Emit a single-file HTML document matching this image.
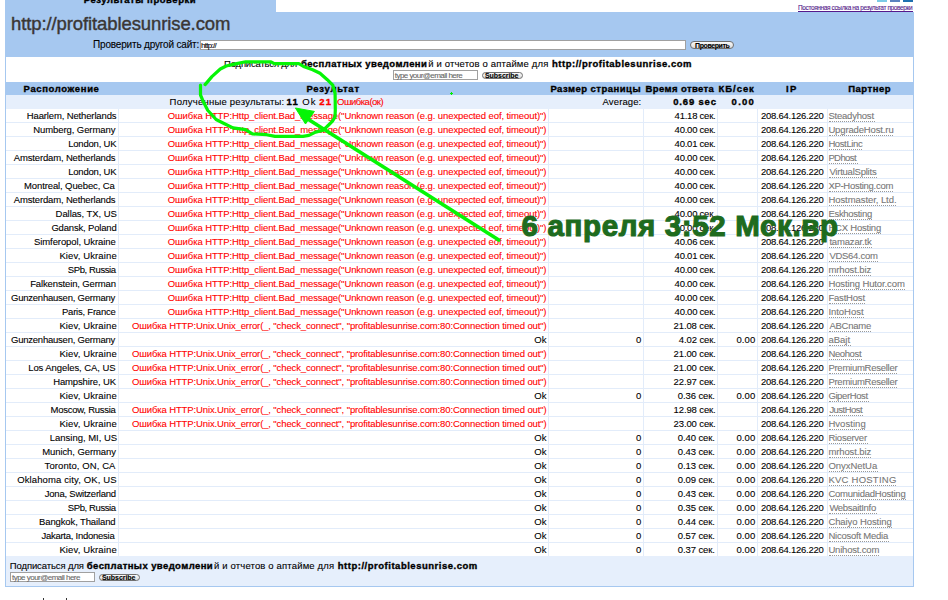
<!DOCTYPE html>
<html><head><meta charset="utf-8"><style>
html,body{margin:0;padding:0;background:#fff;}
body{width:948px;height:600px;overflow:hidden;position:relative;font-family:"Liberation Sans",sans-serif;}
body>div{position:absolute;white-space:pre;-webkit-text-stroke:0.1px currentColor;}
</style></head><body>
<div style="left:5px;top:0px;width:271px;height:12px;background:#a6c8f0;"></div>
<div style="left:5px;top:12px;width:909px;height:45px;background:#a6c8f0;"></div>
<div style="left:83.80px;top:-5px;font-size:9.5px;line-height:9.5px;letter-spacing:0.538px;color:#000;font-weight:bold;-webkit-text-stroke:0.35px currentColor;">Результаты проверки</div>
<div style="left:877px;top:0px;width:10px;height:2px;background:#7ccbe6;"></div>
<div style="left:890px;top:0px;width:10px;height:2px;background:#5a82c0;"></div>
<div style="left:903px;top:0px;width:10px;height:2px;background:#1f70b0;"></div>
<div style="left:798.00px;top:5px;font-size:6.5px;line-height:6.5px;letter-spacing:-0.374px;color:#551a8b;">Постоянная ссылка на результат проверки</div>
<div style="left:798px;top:11px;width:115px;height:1px;background:#551a8b;"></div>
<div style="left:11.00px;top:15px;font-size:18.5px;line-height:18.5px;letter-spacing:-0.100px;color:#3a3634;-webkit-text-stroke:0.4px currentColor;">http://profitablesunrise.com</div>
<div style="left:93.00px;top:40px;font-size:10px;line-height:10px;letter-spacing:-0.174px;color:#000;">Проверить другой сайт:</div>
<div style="left:200px;top:40px;width:484px;height:8px;background:#fff;border:1px solid #a0a0a0;"></div>
<div style="left:201.00px;top:42px;font-size:8px;line-height:8px;letter-spacing:-0.715px;color:#000;">http://</div>
<div style="left:690px;top:41px;width:42px;height:6px;background:linear-gradient(#fafafa,#dcdcdc);border:1px solid #707070;border-radius:4px;"></div>
<div style="left:695.00px;top:42px;font-size:7px;line-height:7px;letter-spacing:-0.399px;color:#000;font-weight:bold;-webkit-text-stroke:0.1px currentColor;">Проверить</div>
<div style="left:5px;top:57px;width:1px;height:25px;background:#a6c8f0;"></div>
<div style="left:913px;top:57px;width:1px;height:25px;background:#a6c8f0;"></div>
<div style="left:224.00px;top:59px;font-size:9.5px;line-height:9.5px;letter-spacing:-0.189px;color:#000;">Подписаться для</div>
<div style="left:301.00px;top:59px;font-size:9.5px;line-height:9.5px;letter-spacing:0.413px;color:#000;font-weight:bold;-webkit-text-stroke:0.35px currentColor;">бесплатных уведомлени</div>
<div style="left:428.20px;top:59px;font-size:9.5px;line-height:9.5px;letter-spacing:0.159px;color:#000;">й и отчетов о аптайме для</div>
<div style="left:552.00px;top:59px;font-size:9.5px;line-height:9.5px;letter-spacing:0.512px;color:#000;font-weight:bold;-webkit-text-stroke:0.35px currentColor;">http://profitablesunrise.com</div>
<div style="left:393px;top:70px;width:83px;height:8px;background:#fff;border:1px solid #a0a0a0;"></div>
<div style="left:394.80px;top:72px;font-size:8px;line-height:8px;letter-spacing:-0.549px;color:#666;">type your@email here</div>
<div style="left:482px;top:72px;width:39px;height:5px;background:linear-gradient(#fafafa,#dcdcdc);border:1px solid #707070;border-radius:4px;"></div>
<div style="left:485.00px;top:72px;font-size:7px;line-height:7px;letter-spacing:-0.056px;color:#000;font-weight:bold;-webkit-text-stroke:0.1px currentColor;">Subscribe</div>
<div style="left:5px;top:82px;width:909px;height:505px;background:#fff;border:1px solid #a6c8f0;border-top:none;box-sizing:border-box;"></div>
<div style="left:5px;top:82px;width:909px;height:13px;background:#a6c8f0;"></div>
<div style="left:6px;top:95px;width:907px;height:14px;background:#e6effc;"></div>
<div style="left:23.60px;top:84px;font-size:9.5px;line-height:9.5px;letter-spacing:0.623px;color:#000;font-weight:bold;-webkit-text-stroke:0.35px currentColor;">Расположение</div>
<div style="left:306.40px;top:84px;font-size:9.5px;line-height:9.5px;letter-spacing:0.750px;color:#000;font-weight:bold;-webkit-text-stroke:0.35px currentColor;">Результат</div>
<div style="left:550.40px;top:84px;font-size:9.5px;line-height:9.5px;letter-spacing:0.479px;color:#000;font-weight:bold;-webkit-text-stroke:0.35px currentColor;">Размер страницы</div>
<div style="left:645.60px;top:84px;font-size:9.5px;line-height:9.5px;letter-spacing:0.384px;color:#000;font-weight:bold;-webkit-text-stroke:0.35px currentColor;">Время ответа</div>
<div style="left:718.60px;top:84px;font-size:9.5px;line-height:9.5px;letter-spacing:0.933px;color:#000;font-weight:bold;-webkit-text-stroke:0.35px currentColor;">КБ/сек</div>
<div style="left:786.00px;top:84px;font-size:9.5px;line-height:9.5px;letter-spacing:1.361px;color:#000;font-weight:bold;-webkit-text-stroke:0.35px currentColor;">IP</div>
<div style="left:848.20px;top:84px;font-size:9.5px;line-height:9.5px;letter-spacing:0.506px;color:#000;font-weight:bold;-webkit-text-stroke:0.35px currentColor;">Партнер</div>
<div style="left:169.60px;top:97px;font-size:9.5px;line-height:9.5px;letter-spacing:0.235px;color:#000;">Полученные результаты:</div>
<div style="left:286.40px;top:97px;font-size:9.5px;line-height:9.5px;letter-spacing:1.241px;color:#000;font-weight:bold;-webkit-text-stroke:0.35px currentColor;">11</div>
<div style="left:302.20px;top:97px;font-size:9.5px;line-height:9.5px;letter-spacing:1.111px;color:#000;">Ok</div>
<div style="left:319.20px;top:97px;font-size:9.5px;line-height:9.5px;letter-spacing:1.217px;color:#f00;font-weight:bold;-webkit-text-stroke:0.35px currentColor;">21</div>
<div style="left:337.00px;top:97px;font-size:9.5px;line-height:9.5px;letter-spacing:-0.501px;color:#f00;">Ошибка(ок)</div>
<div style="left:602.60px;top:97px;font-size:9.5px;line-height:9.5px;letter-spacing:0.113px;color:#000;">Average:</div>
<div style="left:673.20px;top:97px;font-size:9.5px;line-height:9.5px;letter-spacing:0.829px;color:#000;font-weight:bold;-webkit-text-stroke:0.35px currentColor;">0.69 sec</div>
<div style="left:731.60px;top:97px;font-size:9.5px;line-height:9.5px;letter-spacing:1.265px;color:#000;font-weight:bold;-webkit-text-stroke:0.35px currentColor;">0.00</div>
<div style="left:6px;top:122px;width:907px;height:1px;background:#e2ecfa;"></div>
<div style="left:26.80px;top:111px;font-size:9.5px;line-height:9.5px;letter-spacing:-0.140px;color:#000;">Haarlem, Netherlands</div>
<div style="left:167.80px;top:111px;font-size:9.5px;line-height:9.5px;letter-spacing:-0.100px;color:#f00;">Ошибка HTTP:Http_client.Bad_message("Unknown reason (e.g. unexpected eof, timeout)")</div>
<div style="left:674.60px;top:111px;font-size:9.5px;line-height:9.5px;letter-spacing:-0.234px;color:#000;">41.18 сек.</div>
<div style="left:761.00px;top:111px;font-size:9.5px;line-height:9.5px;letter-spacing:-0.250px;color:#000;">208.64.126.220</div>
<div style="left:828.40px;top:111px;font-size:9.5px;line-height:9.5px;letter-spacing:-0.210px;color:#777;">Steadyhost</div>
<div style="left:829px;top:121.1px;width:46px;height:1px;background:transparent;border-top:1px dotted #999;height:0;"></div>
<div style="left:6px;top:136px;width:907px;height:1px;background:#e2ecfa;"></div>
<div style="left:33.20px;top:125px;font-size:9.5px;line-height:9.5px;letter-spacing:-0.078px;color:#000;">Numberg, Germany</div>
<div style="left:167.80px;top:125px;font-size:9.5px;line-height:9.5px;letter-spacing:-0.100px;color:#f00;">Ошибка HTTP:Http_client.Bad_message("Unknown reason (e.g. unexpected eof, timeout)")</div>
<div style="left:674.60px;top:125px;font-size:9.5px;line-height:9.5px;letter-spacing:-0.234px;color:#000;">40.00 сек.</div>
<div style="left:761.00px;top:125px;font-size:9.5px;line-height:9.5px;letter-spacing:-0.250px;color:#000;">208.64.126.220</div>
<div style="left:828.40px;top:125px;font-size:9.5px;line-height:9.5px;letter-spacing:-0.137px;color:#777;">UpgradeHost.ru</div>
<div style="left:829px;top:135.1px;width:64px;height:1px;background:transparent;border-top:1px dotted #999;height:0;"></div>
<div style="left:6px;top:150px;width:907px;height:1px;background:#e2ecfa;"></div>
<div style="left:68.20px;top:139px;font-size:9.5px;line-height:9.5px;letter-spacing:-0.204px;color:#000;">London, UK</div>
<div style="left:167.80px;top:139px;font-size:9.5px;line-height:9.5px;letter-spacing:-0.100px;color:#f00;">Ошибка HTTP:Http_client.Bad_message("Unknown reason (e.g. unexpected eof, timeout)")</div>
<div style="left:674.60px;top:139px;font-size:9.5px;line-height:9.5px;letter-spacing:-0.234px;color:#000;">40.01 сек.</div>
<div style="left:761.00px;top:139px;font-size:9.5px;line-height:9.5px;letter-spacing:-0.250px;color:#000;">208.64.126.220</div>
<div style="left:828.40px;top:139px;font-size:9.5px;line-height:9.5px;letter-spacing:-0.387px;color:#777;">HostLinc</div>
<div style="left:829px;top:149.1px;width:33px;height:1px;background:transparent;border-top:1px dotted #999;height:0;"></div>
<div style="left:6px;top:164px;width:907px;height:1px;background:#e2ecfa;"></div>
<div style="left:13.80px;top:153px;font-size:9.5px;line-height:9.5px;letter-spacing:-0.158px;color:#000;">Amsterdam, Netherlands</div>
<div style="left:167.80px;top:153px;font-size:9.5px;line-height:9.5px;letter-spacing:-0.100px;color:#f00;">Ошибка HTTP:Http_client.Bad_message("Unknown reason (e.g. unexpected eof, timeout)")</div>
<div style="left:674.60px;top:153px;font-size:9.5px;line-height:9.5px;letter-spacing:-0.234px;color:#000;">40.00 сек.</div>
<div style="left:761.00px;top:153px;font-size:9.5px;line-height:9.5px;letter-spacing:-0.250px;color:#000;">208.64.126.220</div>
<div style="left:828.40px;top:153px;font-size:9.5px;line-height:9.5px;letter-spacing:-0.603px;color:#777;">PDhost</div>
<div style="left:829px;top:163.1px;width:29px;height:1px;background:transparent;border-top:1px dotted #999;height:0;"></div>
<div style="left:6px;top:178px;width:907px;height:1px;background:#e2ecfa;"></div>
<div style="left:68.20px;top:167px;font-size:9.5px;line-height:9.5px;letter-spacing:-0.204px;color:#000;">London, UK</div>
<div style="left:167.80px;top:167px;font-size:9.5px;line-height:9.5px;letter-spacing:-0.100px;color:#f00;">Ошибка HTTP:Http_client.Bad_message("Unknown reason (e.g. unexpected eof, timeout)")</div>
<div style="left:674.60px;top:167px;font-size:9.5px;line-height:9.5px;letter-spacing:-0.234px;color:#000;">40.00 сек.</div>
<div style="left:761.00px;top:167px;font-size:9.5px;line-height:9.5px;letter-spacing:-0.250px;color:#000;">208.64.126.220</div>
<div style="left:829.40px;top:167px;font-size:9.5px;line-height:9.5px;letter-spacing:-0.228px;color:#777;">VirtualSplits</div>
<div style="left:829px;top:177.1px;width:48px;height:1px;background:transparent;border-top:1px dotted #999;height:0;"></div>
<div style="left:6px;top:192px;width:907px;height:1px;background:#e2ecfa;"></div>
<div style="left:24.00px;top:181px;font-size:9.5px;line-height:9.5px;letter-spacing:-0.113px;color:#000;">Montreal, Quebec, Ca</div>
<div style="left:167.80px;top:181px;font-size:9.5px;line-height:9.5px;letter-spacing:-0.100px;color:#f00;">Ошибка HTTP:Http_client.Bad_message("Unknown reason (e.g. unexpected eof, timeout)")</div>
<div style="left:674.60px;top:181px;font-size:9.5px;line-height:9.5px;letter-spacing:-0.234px;color:#000;">40.00 сек.</div>
<div style="left:761.00px;top:181px;font-size:9.5px;line-height:9.5px;letter-spacing:-0.250px;color:#000;">208.64.126.220</div>
<div style="left:828.40px;top:181px;font-size:9.5px;line-height:9.5px;letter-spacing:-0.286px;color:#777;">XP-Hosting.com</div>
<div style="left:829px;top:191.1px;width:64px;height:1px;background:transparent;border-top:1px dotted #999;height:0;"></div>
<div style="left:6px;top:206px;width:907px;height:1px;background:#e2ecfa;"></div>
<div style="left:13.80px;top:195px;font-size:9.5px;line-height:9.5px;letter-spacing:-0.158px;color:#000;">Amsterdam, Netherlands</div>
<div style="left:167.80px;top:195px;font-size:9.5px;line-height:9.5px;letter-spacing:-0.100px;color:#f00;">Ошибка HTTP:Http_client.Bad_message("Unknown reason (e.g. unexpected eof, timeout)")</div>
<div style="left:674.60px;top:195px;font-size:9.5px;line-height:9.5px;letter-spacing:-0.234px;color:#000;">40.00 сек.</div>
<div style="left:761.00px;top:195px;font-size:9.5px;line-height:9.5px;letter-spacing:-0.250px;color:#000;">208.64.126.220</div>
<div style="left:828.40px;top:195px;font-size:9.5px;line-height:9.5px;letter-spacing:-0.069px;color:#777;">Hostmaster, Ltd.</div>
<div style="left:829px;top:205.1px;width:67px;height:1px;background:transparent;border-top:1px dotted #999;height:0;"></div>
<div style="left:6px;top:220px;width:907px;height:1px;background:#e2ecfa;"></div>
<div style="left:55.60px;top:209px;font-size:9.5px;line-height:9.5px;letter-spacing:-0.074px;color:#000;">Dallas, TX, US</div>
<div style="left:167.80px;top:209px;font-size:9.5px;line-height:9.5px;letter-spacing:-0.100px;color:#f00;">Ошибка HTTP:Http_client.Bad_message("Unknown reason (e.g. unexpected eof, timeout)")</div>
<div style="left:674.60px;top:209px;font-size:9.5px;line-height:9.5px;letter-spacing:-0.234px;color:#000;">40.00 сек.</div>
<div style="left:761.00px;top:209px;font-size:9.5px;line-height:9.5px;letter-spacing:-0.250px;color:#000;">208.64.126.220</div>
<div style="left:828.40px;top:209px;font-size:9.5px;line-height:9.5px;letter-spacing:-0.299px;color:#777;">Eskhosting</div>
<div style="left:829px;top:219.1px;width:43px;height:1px;background:transparent;border-top:1px dotted #999;height:0;"></div>
<div style="left:6px;top:234px;width:907px;height:1px;background:#e2ecfa;"></div>
<div style="left:51.40px;top:223px;font-size:9.5px;line-height:9.5px;letter-spacing:-0.178px;color:#000;">Gdansk, Poland</div>
<div style="left:167.80px;top:223px;font-size:9.5px;line-height:9.5px;letter-spacing:-0.100px;color:#f00;">Ошибка HTTP:Http_client.Bad_message("Unknown reason (e.g. unexpected eof, timeout)")</div>
<div style="left:674.60px;top:223px;font-size:9.5px;line-height:9.5px;letter-spacing:-0.234px;color:#000;">40.00 сек.</div>
<div style="left:761.00px;top:223px;font-size:9.5px;line-height:9.5px;letter-spacing:-0.250px;color:#000;">208.64.126.220</div>
<div style="left:828.40px;top:223px;font-size:9.5px;line-height:9.5px;letter-spacing:-0.212px;color:#777;">HCX Hosting</div>
<div style="left:829px;top:233.1px;width:52px;height:1px;background:transparent;border-top:1px dotted #999;height:0;"></div>
<div style="left:6px;top:248px;width:907px;height:1px;background:#e2ecfa;"></div>
<div style="left:34.00px;top:237px;font-size:9.5px;line-height:9.5px;letter-spacing:-0.091px;color:#000;">Simferopol, Ukraine</div>
<div style="left:167.80px;top:237px;font-size:9.5px;line-height:9.5px;letter-spacing:-0.100px;color:#f00;">Ошибка HTTP:Http_client.Bad_message("Unknown reason (e.g. unexpected eof, timeout)")</div>
<div style="left:674.60px;top:237px;font-size:9.5px;line-height:9.5px;letter-spacing:-0.234px;color:#000;">40.06 сек.</div>
<div style="left:761.00px;top:237px;font-size:9.5px;line-height:9.5px;letter-spacing:-0.250px;color:#000;">208.64.126.220</div>
<div style="left:829.40px;top:237px;font-size:9.5px;line-height:9.5px;letter-spacing:-0.175px;color:#777;">tamazar.tk</div>
<div style="left:829px;top:247.1px;width:43px;height:1px;background:transparent;border-top:1px dotted #999;height:0;"></div>
<div style="left:6px;top:262px;width:907px;height:1px;background:#e2ecfa;"></div>
<div style="left:59.40px;top:251px;font-size:9.5px;line-height:9.5px;letter-spacing:0.125px;color:#000;">Kiev, Ukraine</div>
<div style="left:167.80px;top:251px;font-size:9.5px;line-height:9.5px;letter-spacing:-0.100px;color:#f00;">Ошибка HTTP:Http_client.Bad_message("Unknown reason (e.g. unexpected eof, timeout)")</div>
<div style="left:674.60px;top:251px;font-size:9.5px;line-height:9.5px;letter-spacing:-0.234px;color:#000;">40.01 сек.</div>
<div style="left:761.00px;top:251px;font-size:9.5px;line-height:9.5px;letter-spacing:-0.250px;color:#000;">208.64.126.220</div>
<div style="left:829.40px;top:251px;font-size:9.5px;line-height:9.5px;letter-spacing:-0.284px;color:#777;">VDS64.com</div>
<div style="left:829px;top:261.1px;width:49px;height:1px;background:transparent;border-top:1px dotted #999;height:0;"></div>
<div style="left:6px;top:276px;width:907px;height:1px;background:#e2ecfa;"></div>
<div style="left:67.80px;top:265px;font-size:9.5px;line-height:9.5px;letter-spacing:-0.399px;color:#000;">SPb, Russia</div>
<div style="left:167.80px;top:265px;font-size:9.5px;line-height:9.5px;letter-spacing:-0.100px;color:#f00;">Ошибка HTTP:Http_client.Bad_message("Unknown reason (e.g. unexpected eof, timeout)")</div>
<div style="left:674.60px;top:265px;font-size:9.5px;line-height:9.5px;letter-spacing:-0.234px;color:#000;">40.00 сек.</div>
<div style="left:761.00px;top:265px;font-size:9.5px;line-height:9.5px;letter-spacing:-0.250px;color:#000;">208.64.126.220</div>
<div style="left:828.40px;top:265px;font-size:9.5px;line-height:9.5px;letter-spacing:-0.119px;color:#777;">mrhost.biz</div>
<div style="left:829px;top:275.1px;width:42px;height:1px;background:transparent;border-top:1px dotted #999;height:0;"></div>
<div style="left:6px;top:290px;width:907px;height:1px;background:#e2ecfa;"></div>
<div style="left:30.20px;top:279px;font-size:9.5px;line-height:9.5px;letter-spacing:-0.133px;color:#000;">Falkenstein, German</div>
<div style="left:167.80px;top:279px;font-size:9.5px;line-height:9.5px;letter-spacing:-0.100px;color:#f00;">Ошибка HTTP:Http_client.Bad_message("Unknown reason (e.g. unexpected eof, timeout)")</div>
<div style="left:674.60px;top:279px;font-size:9.5px;line-height:9.5px;letter-spacing:-0.234px;color:#000;">40.00 сек.</div>
<div style="left:761.00px;top:279px;font-size:9.5px;line-height:9.5px;letter-spacing:-0.250px;color:#000;">208.64.126.220</div>
<div style="left:828.40px;top:279px;font-size:9.5px;line-height:9.5px;letter-spacing:-0.108px;color:#777;">Hosting Hutor.com</div>
<div style="left:829px;top:289.1px;width:76px;height:1px;background:transparent;border-top:1px dotted #999;height:0;"></div>
<div style="left:6px;top:304px;width:907px;height:1px;background:#e2ecfa;"></div>
<div style="left:11.00px;top:293px;font-size:9.5px;line-height:9.5px;letter-spacing:-0.227px;color:#000;">Gunzenhausen, Germany</div>
<div style="left:167.80px;top:293px;font-size:9.5px;line-height:9.5px;letter-spacing:-0.100px;color:#f00;">Ошибка HTTP:Http_client.Bad_message("Unknown reason (e.g. unexpected eof, timeout)")</div>
<div style="left:674.60px;top:293px;font-size:9.5px;line-height:9.5px;letter-spacing:-0.234px;color:#000;">40.00 сек.</div>
<div style="left:761.00px;top:293px;font-size:9.5px;line-height:9.5px;letter-spacing:-0.250px;color:#000;">208.64.126.220</div>
<div style="left:828.40px;top:293px;font-size:9.5px;line-height:9.5px;letter-spacing:-0.196px;color:#777;">FastHost</div>
<div style="left:829px;top:303.1px;width:36px;height:1px;background:transparent;border-top:1px dotted #999;height:0;"></div>
<div style="left:6px;top:318px;width:907px;height:1px;background:#e2ecfa;"></div>
<div style="left:62.00px;top:307px;font-size:9.5px;line-height:9.5px;letter-spacing:-0.226px;color:#000;">Paris, France</div>
<div style="left:167.80px;top:307px;font-size:9.5px;line-height:9.5px;letter-spacing:-0.100px;color:#f00;">Ошибка HTTP:Http_client.Bad_message("Unknown reason (e.g. unexpected eof, timeout)")</div>
<div style="left:674.60px;top:307px;font-size:9.5px;line-height:9.5px;letter-spacing:-0.234px;color:#000;">40.00 сек.</div>
<div style="left:761.00px;top:307px;font-size:9.5px;line-height:9.5px;letter-spacing:-0.250px;color:#000;">208.64.126.220</div>
<div style="left:828.40px;top:307px;font-size:9.5px;line-height:9.5px;letter-spacing:-0.034px;color:#777;">IntoHost</div>
<div style="left:829px;top:317.1px;width:35px;height:1px;background:transparent;border-top:1px dotted #999;height:0;"></div>
<div style="left:6px;top:332px;width:907px;height:1px;background:#e2ecfa;"></div>
<div style="left:59.40px;top:321px;font-size:9.5px;line-height:9.5px;letter-spacing:0.125px;color:#000;">Kiev, Ukraine</div>
<div style="left:132.00px;top:321px;font-size:9.5px;line-height:9.5px;letter-spacing:-0.124px;color:#f00;">Ошибка HTTP:Unix.Unix_error(_, "check_connect", "profitablesunrise.com:80:Connection timed out")</div>
<div style="left:673.60px;top:321px;font-size:9.5px;line-height:9.5px;letter-spacing:-0.122px;color:#000;">21.08 сек.</div>
<div style="left:761.00px;top:321px;font-size:9.5px;line-height:9.5px;letter-spacing:-0.250px;color:#000;">208.64.126.220</div>
<div style="left:829.40px;top:321px;font-size:9.5px;line-height:9.5px;letter-spacing:-0.252px;color:#777;">ABCname</div>
<div style="left:829px;top:331.1px;width:42px;height:1px;background:transparent;border-top:1px dotted #999;height:0;"></div>
<div style="left:6px;top:346px;width:907px;height:1px;background:#e2ecfa;"></div>
<div style="left:11.00px;top:335px;font-size:9.5px;line-height:9.5px;letter-spacing:-0.227px;color:#000;">Gunzenhausen, Germany</div>
<div style="left:534.20px;top:335px;font-size:9.5px;line-height:9.5px;letter-spacing:0.111px;color:#000;">Ok</div>
<div style="left:636.00px;top:335px;font-size:9.5px;line-height:9.5px;letter-spacing:-0.400px;color:#000;">0</div>
<div style="left:678.80px;top:335px;font-size:9.5px;line-height:9.5px;letter-spacing:-0.102px;color:#000;">4.02 сек.</div>
<div style="left:736.40px;top:335px;font-size:9.5px;line-height:9.5px;letter-spacing:0.098px;color:#000;">0.00</div>
<div style="left:761.00px;top:335px;font-size:9.5px;line-height:9.5px;letter-spacing:-0.250px;color:#000;">208.64.126.220</div>
<div style="left:828.40px;top:335px;font-size:9.5px;line-height:9.5px;letter-spacing:-0.003px;color:#777;">aBajt</div>
<div style="left:829px;top:345.1px;width:22px;height:1px;background:transparent;border-top:1px dotted #999;height:0;"></div>
<div style="left:6px;top:360px;width:907px;height:1px;background:#e2ecfa;"></div>
<div style="left:59.40px;top:349px;font-size:9.5px;line-height:9.5px;letter-spacing:0.125px;color:#000;">Kiev, Ukraine</div>
<div style="left:132.00px;top:349px;font-size:9.5px;line-height:9.5px;letter-spacing:-0.124px;color:#f00;">Ошибка HTTP:Unix.Unix_error(_, "check_connect", "profitablesunrise.com:80:Connection timed out")</div>
<div style="left:673.60px;top:349px;font-size:9.5px;line-height:9.5px;letter-spacing:-0.122px;color:#000;">21.00 сек.</div>
<div style="left:761.00px;top:349px;font-size:9.5px;line-height:9.5px;letter-spacing:-0.250px;color:#000;">208.64.126.220</div>
<div style="left:828.40px;top:349px;font-size:9.5px;line-height:9.5px;letter-spacing:-0.374px;color:#777;">Neohost</div>
<div style="left:829px;top:359.1px;width:33px;height:1px;background:transparent;border-top:1px dotted #999;height:0;"></div>
<div style="left:6px;top:374px;width:907px;height:1px;background:#e2ecfa;"></div>
<div style="left:28.20px;top:363px;font-size:9.5px;line-height:9.5px;letter-spacing:-0.078px;color:#000;">Los Angeles, CA, US</div>
<div style="left:132.00px;top:363px;font-size:9.5px;line-height:9.5px;letter-spacing:-0.124px;color:#f00;">Ошибка HTTP:Unix.Unix_error(_, "check_connect", "profitablesunrise.com:80:Connection timed out")</div>
<div style="left:673.60px;top:363px;font-size:9.5px;line-height:9.5px;letter-spacing:-0.122px;color:#000;">21.00 сек.</div>
<div style="left:761.00px;top:363px;font-size:9.5px;line-height:9.5px;letter-spacing:-0.250px;color:#000;">208.64.126.220</div>
<div style="left:828.40px;top:363px;font-size:9.5px;line-height:9.5px;letter-spacing:-0.263px;color:#777;">PremiumReseller</div>
<div style="left:829px;top:373.1px;width:68px;height:1px;background:transparent;border-top:1px dotted #999;height:0;"></div>
<div style="left:6px;top:388px;width:907px;height:1px;background:#e2ecfa;"></div>
<div style="left:53.20px;top:377px;font-size:9.5px;line-height:9.5px;letter-spacing:-0.131px;color:#000;">Hampshire, UK</div>
<div style="left:132.00px;top:377px;font-size:9.5px;line-height:9.5px;letter-spacing:-0.124px;color:#f00;">Ошибка HTTP:Unix.Unix_error(_, "check_connect", "profitablesunrise.com:80:Connection timed out")</div>
<div style="left:673.60px;top:377px;font-size:9.5px;line-height:9.5px;letter-spacing:-0.122px;color:#000;">22.97 сек.</div>
<div style="left:761.00px;top:377px;font-size:9.5px;line-height:9.5px;letter-spacing:-0.250px;color:#000;">208.64.126.220</div>
<div style="left:828.40px;top:377px;font-size:9.5px;line-height:9.5px;letter-spacing:-0.263px;color:#777;">PremiumReseller</div>
<div style="left:829px;top:387.1px;width:68px;height:1px;background:transparent;border-top:1px dotted #999;height:0;"></div>
<div style="left:6px;top:402px;width:907px;height:1px;background:#e2ecfa;"></div>
<div style="left:59.40px;top:391px;font-size:9.5px;line-height:9.5px;letter-spacing:0.125px;color:#000;">Kiev, Ukraine</div>
<div style="left:534.20px;top:391px;font-size:9.5px;line-height:9.5px;letter-spacing:0.111px;color:#000;">Ok</div>
<div style="left:636.00px;top:391px;font-size:9.5px;line-height:9.5px;letter-spacing:-0.400px;color:#000;">0</div>
<div style="left:677.80px;top:391px;font-size:9.5px;line-height:9.5px;letter-spacing:-0.102px;color:#000;">0.36 сек.</div>
<div style="left:736.40px;top:391px;font-size:9.5px;line-height:9.5px;letter-spacing:0.098px;color:#000;">0.00</div>
<div style="left:761.00px;top:391px;font-size:9.5px;line-height:9.5px;letter-spacing:-0.250px;color:#000;">208.64.126.220</div>
<div style="left:828.40px;top:391px;font-size:9.5px;line-height:9.5px;letter-spacing:-0.391px;color:#777;">GiperHost</div>
<div style="left:829px;top:401.1px;width:40px;height:1px;background:transparent;border-top:1px dotted #999;height:0;"></div>
<div style="left:6px;top:416px;width:907px;height:1px;background:#e2ecfa;"></div>
<div style="left:50.60px;top:405px;font-size:9.5px;line-height:9.5px;letter-spacing:-0.258px;color:#000;">Moscow, Russia</div>
<div style="left:132.00px;top:405px;font-size:9.5px;line-height:9.5px;letter-spacing:-0.124px;color:#f00;">Ошибка HTTP:Unix.Unix_error(_, "check_connect", "profitablesunrise.com:80:Connection timed out")</div>
<div style="left:673.60px;top:405px;font-size:9.5px;line-height:9.5px;letter-spacing:-0.122px;color:#000;">12.98 сек.</div>
<div style="left:761.00px;top:405px;font-size:9.5px;line-height:9.5px;letter-spacing:-0.250px;color:#000;">208.64.126.220</div>
<div style="left:829.40px;top:405px;font-size:9.5px;line-height:9.5px;letter-spacing:-0.545px;color:#777;">JustHost</div>
<div style="left:829px;top:415.1px;width:34px;height:1px;background:transparent;border-top:1px dotted #999;height:0;"></div>
<div style="left:6px;top:430px;width:907px;height:1px;background:#e2ecfa;"></div>
<div style="left:59.40px;top:419px;font-size:9.5px;line-height:9.5px;letter-spacing:0.125px;color:#000;">Kiev, Ukraine</div>
<div style="left:132.00px;top:419px;font-size:9.5px;line-height:9.5px;letter-spacing:-0.124px;color:#f00;">Ошибка HTTP:Unix.Unix_error(_, "check_connect", "profitablesunrise.com:80:Connection timed out")</div>
<div style="left:673.60px;top:419px;font-size:9.5px;line-height:9.5px;letter-spacing:-0.122px;color:#000;">23.00 сек.</div>
<div style="left:761.00px;top:419px;font-size:9.5px;line-height:9.5px;letter-spacing:-0.250px;color:#000;">208.64.126.220</div>
<div style="left:828.40px;top:419px;font-size:9.5px;line-height:9.5px;letter-spacing:0.046px;color:#777;">Hvosting</div>
<div style="left:829px;top:429.1px;width:36px;height:1px;background:transparent;border-top:1px dotted #999;height:0;"></div>
<div style="left:6px;top:444px;width:907px;height:1px;background:#e2ecfa;"></div>
<div style="left:49.80px;top:433px;font-size:9.5px;line-height:9.5px;letter-spacing:-0.018px;color:#000;">Lansing, MI, US</div>
<div style="left:534.20px;top:433px;font-size:9.5px;line-height:9.5px;letter-spacing:0.111px;color:#000;">Ok</div>
<div style="left:636.00px;top:433px;font-size:9.5px;line-height:9.5px;letter-spacing:-0.400px;color:#000;">0</div>
<div style="left:677.80px;top:433px;font-size:9.5px;line-height:9.5px;letter-spacing:-0.102px;color:#000;">0.40 сек.</div>
<div style="left:736.40px;top:433px;font-size:9.5px;line-height:9.5px;letter-spacing:0.098px;color:#000;">0.00</div>
<div style="left:761.00px;top:433px;font-size:9.5px;line-height:9.5px;letter-spacing:-0.250px;color:#000;">208.64.126.220</div>
<div style="left:828.40px;top:433px;font-size:9.5px;line-height:9.5px;letter-spacing:-0.248px;color:#777;">Rioserver</div>
<div style="left:829px;top:443.1px;width:39px;height:1px;background:transparent;border-top:1px dotted #999;height:0;"></div>
<div style="left:6px;top:458px;width:907px;height:1px;background:#e2ecfa;"></div>
<div style="left:42.20px;top:447px;font-size:9.5px;line-height:9.5px;letter-spacing:-0.087px;color:#000;">Munich, Germany</div>
<div style="left:534.20px;top:447px;font-size:9.5px;line-height:9.5px;letter-spacing:0.111px;color:#000;">Ok</div>
<div style="left:636.00px;top:447px;font-size:9.5px;line-height:9.5px;letter-spacing:-0.400px;color:#000;">0</div>
<div style="left:677.80px;top:447px;font-size:9.5px;line-height:9.5px;letter-spacing:-0.102px;color:#000;">0.43 сек.</div>
<div style="left:736.40px;top:447px;font-size:9.5px;line-height:9.5px;letter-spacing:0.098px;color:#000;">0.00</div>
<div style="left:761.00px;top:447px;font-size:9.5px;line-height:9.5px;letter-spacing:-0.250px;color:#000;">208.64.126.220</div>
<div style="left:828.40px;top:447px;font-size:9.5px;line-height:9.5px;letter-spacing:-0.119px;color:#777;">mrhost.biz</div>
<div style="left:829px;top:457.1px;width:42px;height:1px;background:transparent;border-top:1px dotted #999;height:0;"></div>
<div style="left:6px;top:472px;width:907px;height:1px;background:#e2ecfa;"></div>
<div style="left:44.60px;top:461px;font-size:9.5px;line-height:9.5px;letter-spacing:0.082px;color:#000;">Toronto, ON, CA</div>
<div style="left:534.20px;top:461px;font-size:9.5px;line-height:9.5px;letter-spacing:0.111px;color:#000;">Ok</div>
<div style="left:636.00px;top:461px;font-size:9.5px;line-height:9.5px;letter-spacing:-0.400px;color:#000;">0</div>
<div style="left:677.80px;top:461px;font-size:9.5px;line-height:9.5px;letter-spacing:-0.102px;color:#000;">0.13 сек.</div>
<div style="left:736.40px;top:461px;font-size:9.5px;line-height:9.5px;letter-spacing:0.098px;color:#000;">0.00</div>
<div style="left:761.00px;top:461px;font-size:9.5px;line-height:9.5px;letter-spacing:-0.250px;color:#000;">208.64.126.220</div>
<div style="left:828.40px;top:461px;font-size:9.5px;line-height:9.5px;letter-spacing:-0.040px;color:#777;">OnyxNetUa</div>
<div style="left:829px;top:471.1px;width:49px;height:1px;background:transparent;border-top:1px dotted #999;height:0;"></div>
<div style="left:6px;top:486px;width:907px;height:1px;background:#e2ecfa;"></div>
<div style="left:17.20px;top:475px;font-size:9.5px;line-height:9.5px;letter-spacing:0.119px;color:#000;">Oklahoma city, OK, US</div>
<div style="left:534.20px;top:475px;font-size:9.5px;line-height:9.5px;letter-spacing:0.111px;color:#000;">Ok</div>
<div style="left:636.00px;top:475px;font-size:9.5px;line-height:9.5px;letter-spacing:-0.400px;color:#000;">0</div>
<div style="left:677.80px;top:475px;font-size:9.5px;line-height:9.5px;letter-spacing:-0.102px;color:#000;">0.09 сек.</div>
<div style="left:736.40px;top:475px;font-size:9.5px;line-height:9.5px;letter-spacing:0.098px;color:#000;">0.00</div>
<div style="left:761.00px;top:475px;font-size:9.5px;line-height:9.5px;letter-spacing:-0.250px;color:#000;">208.64.126.220</div>
<div style="left:828.40px;top:475px;font-size:9.5px;line-height:9.5px;letter-spacing:0.244px;color:#777;">KVC HOSTING</div>
<div style="left:829px;top:485.1px;width:67px;height:1px;background:transparent;border-top:1px dotted #999;height:0;"></div>
<div style="left:6px;top:500px;width:907px;height:1px;background:#e2ecfa;"></div>
<div style="left:44.80px;top:489px;font-size:9.5px;line-height:9.5px;letter-spacing:-0.231px;color:#000;">Jona, Switzerland</div>
<div style="left:534.20px;top:489px;font-size:9.5px;line-height:9.5px;letter-spacing:0.111px;color:#000;">Ok</div>
<div style="left:636.00px;top:489px;font-size:9.5px;line-height:9.5px;letter-spacing:-0.400px;color:#000;">0</div>
<div style="left:677.80px;top:489px;font-size:9.5px;line-height:9.5px;letter-spacing:-0.102px;color:#000;">0.43 сек.</div>
<div style="left:736.40px;top:489px;font-size:9.5px;line-height:9.5px;letter-spacing:0.098px;color:#000;">0.00</div>
<div style="left:761.00px;top:489px;font-size:9.5px;line-height:9.5px;letter-spacing:-0.250px;color:#000;">208.64.126.220</div>
<div style="left:828.40px;top:489px;font-size:9.5px;line-height:9.5px;letter-spacing:-0.234px;color:#777;">ComunidadHosting</div>
<div style="left:829px;top:499.1px;width:77px;height:1px;background:transparent;border-top:1px dotted #999;height:0;"></div>
<div style="left:6px;top:514px;width:907px;height:1px;background:#e2ecfa;"></div>
<div style="left:67.80px;top:503px;font-size:9.5px;line-height:9.5px;letter-spacing:-0.399px;color:#000;">SPb, Russia</div>
<div style="left:534.20px;top:503px;font-size:9.5px;line-height:9.5px;letter-spacing:0.111px;color:#000;">Ok</div>
<div style="left:636.00px;top:503px;font-size:9.5px;line-height:9.5px;letter-spacing:-0.400px;color:#000;">0</div>
<div style="left:677.80px;top:503px;font-size:9.5px;line-height:9.5px;letter-spacing:-0.102px;color:#000;">0.35 сек.</div>
<div style="left:736.40px;top:503px;font-size:9.5px;line-height:9.5px;letter-spacing:0.098px;color:#000;">0.00</div>
<div style="left:761.00px;top:503px;font-size:9.5px;line-height:9.5px;letter-spacing:-0.250px;color:#000;">208.64.126.220</div>
<div style="left:829.40px;top:503px;font-size:9.5px;line-height:9.5px;letter-spacing:-0.321px;color:#777;">WebsaitInfo</div>
<div style="left:829px;top:513.1px;width:48px;height:1px;background:transparent;border-top:1px dotted #999;height:0;"></div>
<div style="left:6px;top:528px;width:907px;height:1px;background:#e2ecfa;"></div>
<div style="left:39.00px;top:517px;font-size:9.5px;line-height:9.5px;letter-spacing:-0.119px;color:#000;">Bangkok, Thailand</div>
<div style="left:534.20px;top:517px;font-size:9.5px;line-height:9.5px;letter-spacing:0.111px;color:#000;">Ok</div>
<div style="left:636.00px;top:517px;font-size:9.5px;line-height:9.5px;letter-spacing:-0.400px;color:#000;">0</div>
<div style="left:677.80px;top:517px;font-size:9.5px;line-height:9.5px;letter-spacing:-0.102px;color:#000;">0.44 сек.</div>
<div style="left:736.40px;top:517px;font-size:9.5px;line-height:9.5px;letter-spacing:0.098px;color:#000;">0.00</div>
<div style="left:761.00px;top:517px;font-size:9.5px;line-height:9.5px;letter-spacing:-0.250px;color:#000;">208.64.126.220</div>
<div style="left:828.40px;top:517px;font-size:9.5px;line-height:9.5px;letter-spacing:-0.088px;color:#777;">Chaiyo Hosting</div>
<div style="left:829px;top:527.1px;width:63px;height:1px;background:transparent;border-top:1px dotted #999;height:0;"></div>
<div style="left:6px;top:542px;width:907px;height:1px;background:#e2ecfa;"></div>
<div style="left:41.40px;top:531px;font-size:9.5px;line-height:9.5px;letter-spacing:-0.256px;color:#000;">Jakarta, Indonesia</div>
<div style="left:534.20px;top:531px;font-size:9.5px;line-height:9.5px;letter-spacing:0.111px;color:#000;">Ok</div>
<div style="left:636.00px;top:531px;font-size:9.5px;line-height:9.5px;letter-spacing:-0.400px;color:#000;">0</div>
<div style="left:677.80px;top:531px;font-size:9.5px;line-height:9.5px;letter-spacing:-0.102px;color:#000;">0.57 сек.</div>
<div style="left:736.40px;top:531px;font-size:9.5px;line-height:9.5px;letter-spacing:0.098px;color:#000;">0.00</div>
<div style="left:761.00px;top:531px;font-size:9.5px;line-height:9.5px;letter-spacing:-0.250px;color:#000;">208.64.126.220</div>
<div style="left:828.40px;top:531px;font-size:9.5px;line-height:9.5px;letter-spacing:-0.234px;color:#777;">Nicosoft Media</div>
<div style="left:829px;top:541.1px;width:60px;height:1px;background:transparent;border-top:1px dotted #999;height:0;"></div>
<div style="left:59.40px;top:545px;font-size:9.5px;line-height:9.5px;letter-spacing:0.125px;color:#000;">Kiev, Ukraine</div>
<div style="left:534.20px;top:545px;font-size:9.5px;line-height:9.5px;letter-spacing:0.111px;color:#000;">Ok</div>
<div style="left:636.00px;top:545px;font-size:9.5px;line-height:9.5px;letter-spacing:-0.400px;color:#000;">0</div>
<div style="left:677.80px;top:545px;font-size:9.5px;line-height:9.5px;letter-spacing:-0.102px;color:#000;">0.37 сек.</div>
<div style="left:736.40px;top:545px;font-size:9.5px;line-height:9.5px;letter-spacing:0.098px;color:#000;">0.00</div>
<div style="left:761.00px;top:545px;font-size:9.5px;line-height:9.5px;letter-spacing:-0.250px;color:#000;">208.64.126.220</div>
<div style="left:828.40px;top:545px;font-size:9.5px;line-height:9.5px;letter-spacing:-0.188px;color:#777;">Unihost.com</div>
<div style="left:829px;top:555.1px;width:50px;height:1px;background:transparent;border-top:1px dotted #999;height:0;"></div>
<div style="left:118px;top:109px;width:1px;height:447px;background:#e2ecfa;"></div>
<div style="left:548px;top:109px;width:1px;height:447px;background:#e2ecfa;"></div>
<div style="left:643px;top:109px;width:1px;height:447px;background:#e2ecfa;"></div>
<div style="left:717px;top:109px;width:1px;height:447px;background:#e2ecfa;"></div>
<div style="left:757px;top:109px;width:1px;height:447px;background:#e2ecfa;"></div>
<div style="left:827px;top:109px;width:1px;height:447px;background:#e2ecfa;"></div>
<div style="left:6px;top:556px;width:907px;height:30px;background:#e6effc;"></div>
<div style="left:9.80px;top:561px;font-size:9.5px;line-height:9.5px;letter-spacing:-0.117px;color:#000;">Подписаться для</div>
<div style="left:86.80px;top:561px;font-size:9.5px;line-height:9.5px;letter-spacing:0.413px;color:#000;font-weight:bold;-webkit-text-stroke:0.35px currentColor;">бесплатных уведомлени</div>
<div style="left:214.00px;top:561px;font-size:9.5px;line-height:9.5px;letter-spacing:0.159px;color:#000;">й и отчетов о аптайме для</div>
<div style="left:337.80px;top:561px;font-size:9.5px;line-height:9.5px;letter-spacing:0.512px;color:#000;font-weight:bold;-webkit-text-stroke:0.35px currentColor;">http://profitablesunrise.com</div>
<div style="left:10px;top:572px;width:83px;height:8px;background:#fff;border:1px solid #a0a0a0;"></div>
<div style="left:12.00px;top:574px;font-size:8px;line-height:8px;letter-spacing:-0.523px;color:#666;">type your@email here</div>
<div style="left:99px;top:574px;width:39px;height:5px;background:linear-gradient(#fafafa,#dcdcdc);border:1px solid #707070;border-radius:4px;"></div>
<div style="left:102.00px;top:574px;font-size:7px;line-height:7px;letter-spacing:-0.056px;color:#000;font-weight:bold;-webkit-text-stroke:0.1px currentColor;">Subscribe</div>
<div style="left:43px;top:598px;width:1px;height:2px;background:#333;"></div>
<div style="left:66px;top:598px;width:1px;height:2px;background:#333;"></div>
<svg width="948" height="600" style="position:absolute;left:0;top:0">
<polyline points="205.1,84.6 211.9,76.6 220.3,69 226.2,66 235.5,63.9 245.6,61.8 271,61.8 274.2,63.7 298.9,63.7 303.5,66.5 312.7,69.7 320,73.3 327.3,79.7 332.8,85.2 335.1,93.5 335.3,110 335,116.9 332.5,121.1 326.6,127 322.4,130.4 315.6,132.1 308.9,135.4 303,136.3 275,136.4 266.7,134.7 252.4,133.8 245.6,129.6 233,127.9 224.5,123.7 216.1,119.5 207.7,110.2 203.4,101.8 200.5,95 200.5,85" fill="none" stroke="#05f505" stroke-width="3.2" stroke-linejoin="round" stroke-linecap="round"/>
<line x1="498.8" y1="240" x2="303" y2="116" stroke="#05f505" stroke-width="3.6" stroke-linecap="round"/>
<polygon points="295.4,108 314.4,111.4 305.5,124" fill="#05f505" stroke="#05f505" stroke-width="1" stroke-linejoin="round"/>
<path d="M450,93h3v1h-3zM451,92h1v3h-1z" fill="#00f000"/>
</svg>
<div style="left:521.60px;top:211px;font-size:29.5px;line-height:29.5px;letter-spacing:0.641px;color:#1e6b1e;font-weight:bold;-webkit-text-stroke:1.1px currentColor;">6 апреля 3:52 Мск.вр</div>
</body></html>
